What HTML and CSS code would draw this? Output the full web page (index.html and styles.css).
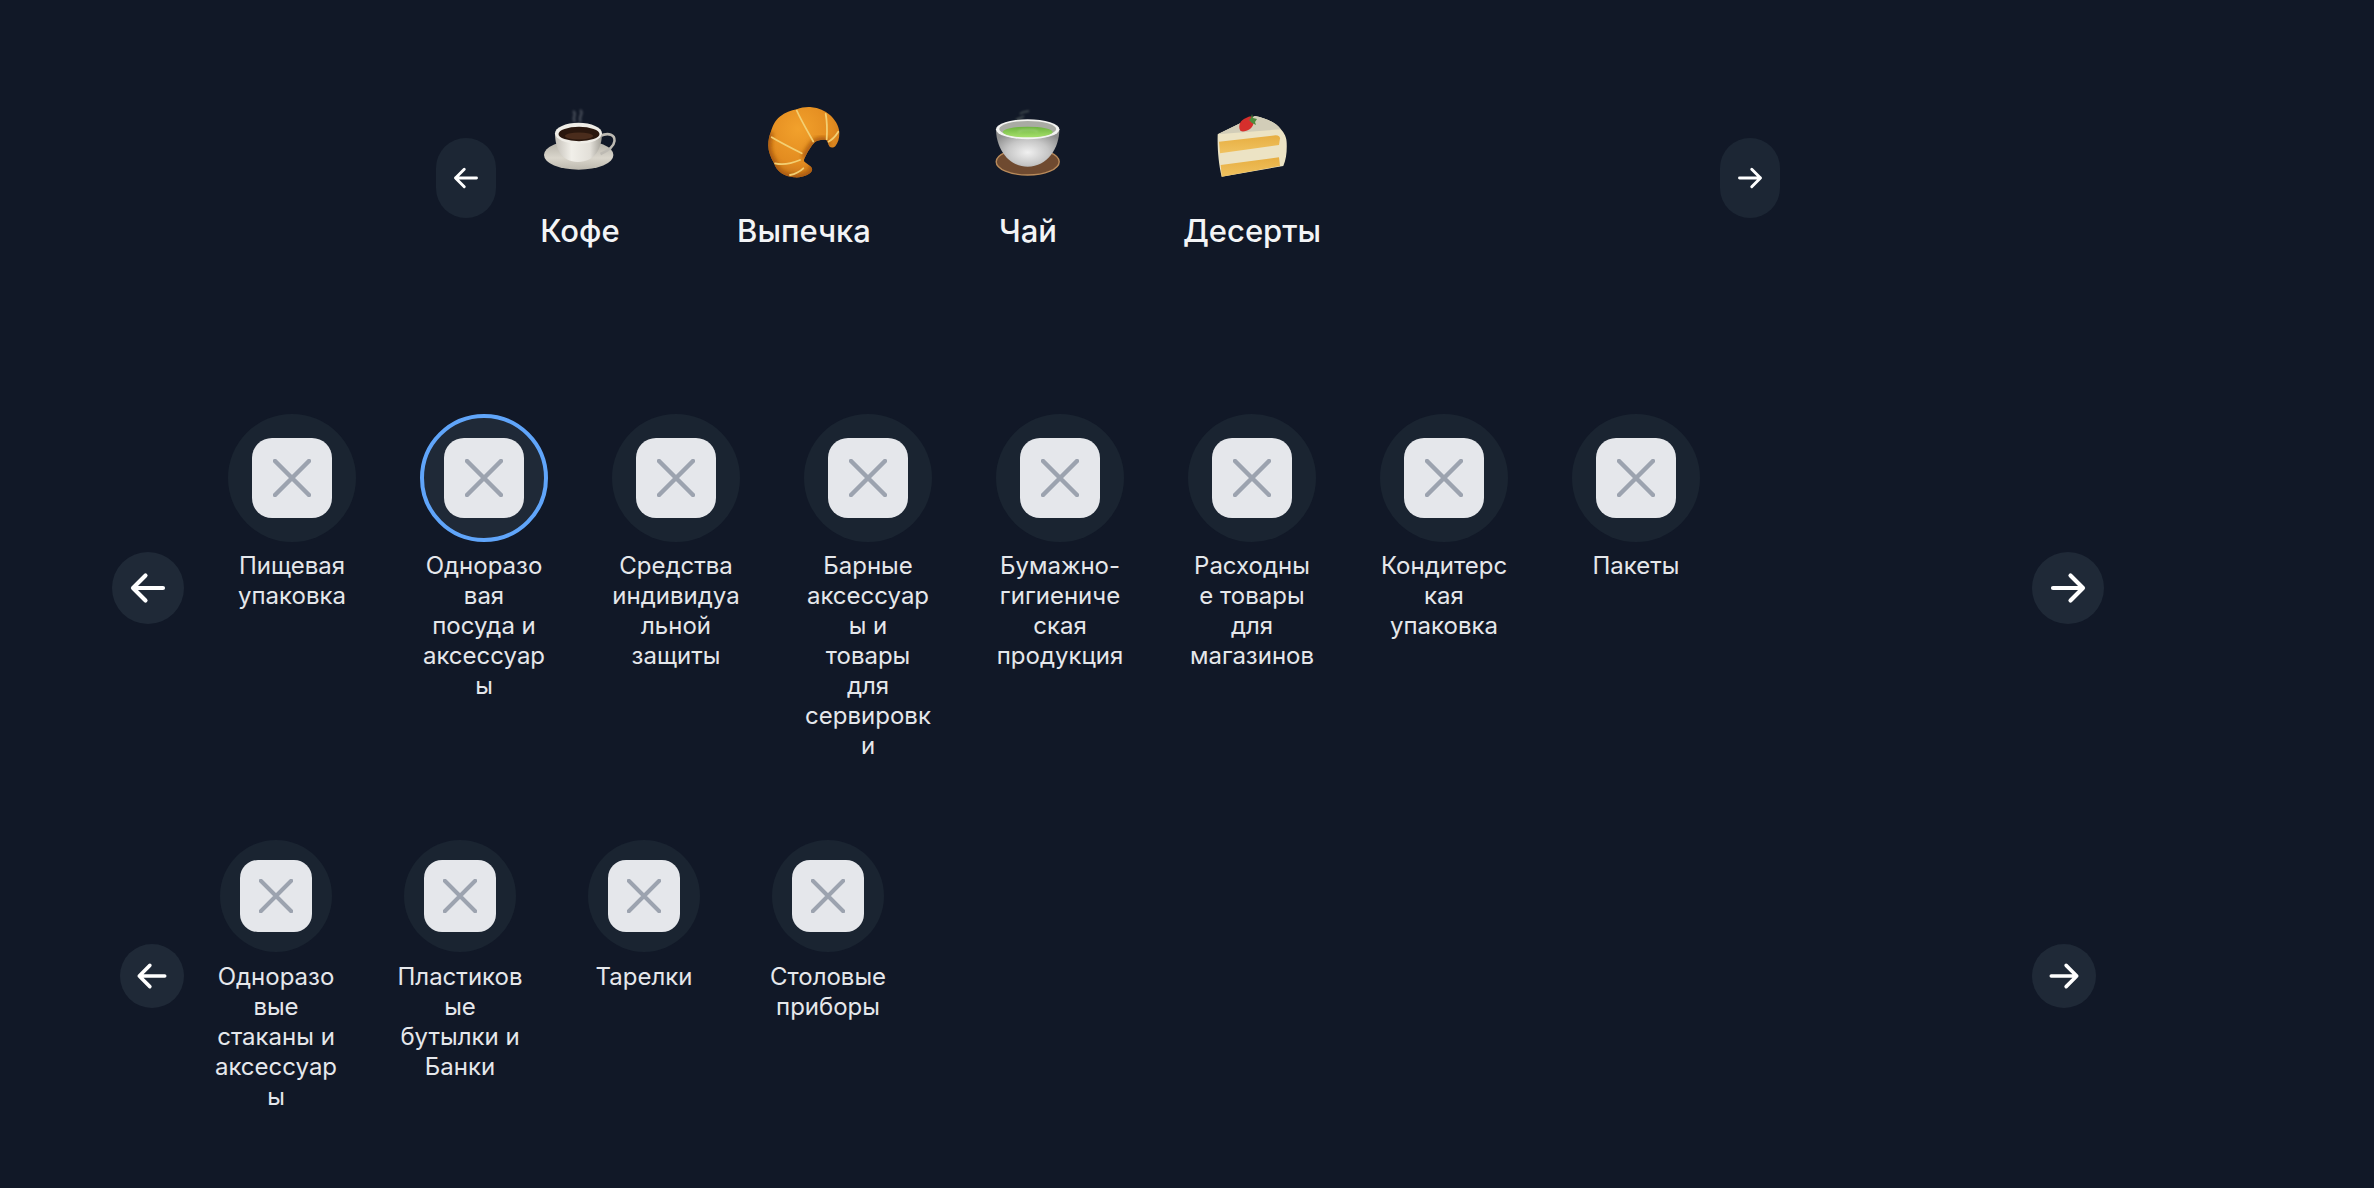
FILE: index.html
```html
<!DOCTYPE html>
<html lang="ru">
<head>
    <meta charset="UTF-8">
    <meta name="viewport" content="width=device-width, initial-scale=1.0">
    <title>Категории</title>
    <link rel="stylesheet" href="styles.css">
</head>
<body>
    <svg class="sprites" width="0" height="0" aria-hidden="true">
        <symbol id="arrow-left" viewBox="0 0 24 24"><path d="M10.5 19.5 3 12l7.5-7.5M3 12h18"/></symbol>
        <symbol id="arrow-right" viewBox="0 0 24 24"><path d="M13.5 4.5 21 12l-7.5 7.5M21 12H3"/></symbol>
        <symbol id="cross" viewBox="0 0 38 38"><path d="M2 2l34 34M36 2 2 36"/></symbol>
    </svg>

    <section class="row row-emoji">
        <button class="arrow"><svg><use href="#arrow-left"/></svg></button>
        <div class="track">
            <div class="emoji-item">
                <svg class="emoji" viewBox="0 0 72 72">
                    <defs>
                        <linearGradient id="cupBody" x1="0" x2="1" y1="0" y2="0">
                            <stop offset="0" stop-color="#c4c0b8"/>
                            <stop offset="0.35" stop-color="#f1efe9"/>
                            <stop offset="0.75" stop-color="#e2dfd8"/>
                            <stop offset="1" stop-color="#a19e96"/>
                        </linearGradient>
                        <linearGradient id="saucer" x1="0" x2="0" y1="0" y2="1">
                            <stop offset="0" stop-color="#b0ada4"/>
                            <stop offset="0.6" stop-color="#dad6cc"/>
                            <stop offset="1" stop-color="#bcb8ae"/>
                        </linearGradient>
                        <filter id="soft" x="-50%" y="-50%" width="200%" height="200%"><feGaussianBlur stdDeviation="1.100"/></filter>
                    </defs>
                    <ellipse cx="34.700" cy="49" rx="34.700" ry="14.700" fill="url(#saucer)"/>
                    <path d="M56 30c9-4 15-1 14.500 5-.5 5-7 10-14 13" fill="none" stroke="#bdbab3" stroke-width="2.600"/>
                    <path d="M11 27c0 15 6 29 23 29s24-14 24-29z" fill="url(#cupBody)"/>
                    <ellipse cx="34.500" cy="27.300" rx="23.500" ry="10.500" fill="#efede7"/>
                    <ellipse cx="35" cy="28" rx="20.500" ry="7.200" fill="#2a170e"/>
                    <ellipse cx="35" cy="30" rx="14" ry="3.500" fill="#4a2c1c"/>
                    <path d="M29 5c5 3-2 6 2 11M36 4c5 3-3 7 1 12" fill="none" stroke="#a3a7ae" stroke-width="2.400" opacity="0.35" filter="url(#soft)"/>
                </svg>
                <span class="emoji-label">Кофе</span>
            </div>
            <div class="emoji-item">
                <svg class="emoji" viewBox="0 0 72 72">
                    <defs>
                        <radialGradient id="crust" cx="0.42" cy="0.32" r="0.72">
                            <stop offset="0" stop-color="#f2a12c"/>
                            <stop offset="0.65" stop-color="#e38c20"/>
                            <stop offset="1" stop-color="#c4731a"/>
                        </radialGradient>
                        <clipPath id="croissantClip">
                            <path d="M42 60c4 3 2 7-3 9-4 2-9 2.800-13 2.300-5-.5-9-1.600-12.500-4-4-3-6.500-6.500-7.500-10C2.500 51 .2 45 .3 39c0-5 1-9 2.400-12.700C4.500 20 7 14.500 12 10.500 17 6.500 23 4.500 28.700 3.300 33.500 1.500 39 .7 43.700 1.300 50.500 2 57 4.500 62 9c5 4.500 8.800 10.500 9.300 17 .3 5.500-1 10.500-3.800 14-2 2-4.500 2-6 .5-1.500-2-1.500-4.700-2.800-6.200-4-1-9-.3-12.400 2.400-3 3-7 9.300-10 16.300-.8 1.500 0 3 1.500 3.700z"/>
                        </clipPath>
                        <filter id="crustBlur" x="-20%" y="-20%" width="140%" height="140%"><feGaussianBlur stdDeviation="2.200"/></filter>
                    </defs>
                    <g clip-path="url(#croissantClip)">
                        <rect width="72" height="72" fill="url(#crust)"/>
                        <path d="M42 60c4 3 2 7-3 9-4 2-9 2.800-13 2.300-5-.5-9-1.600-12.500-4-4-3-6.500-6.500-7.500-10C2.500 51 .2 45 .3 39c0-5 1-9 2.400-12.700" fill="none" stroke="#a8590f" stroke-width="6" filter="url(#crustBlur)"/>
                        <path d="M60 40c-1-3-1-5-2-6-4-1-9 0-12 2-3 3-7 9-10 16" fill="none" stroke="#a8590f" stroke-width="5" filter="url(#crustBlur)"/>
                        <path d="M28.700 4.500c5 11 11 21 16.600 31M57.700 8c1.500 8 1.500 17 1 25.300M3.700 31.300c10 6 20 11 30 16M7 57.300c8 2 17 0 25-3.300M22 69c5-1 10-3.500 13.300-6.700M60.300 35.700c4-2 7.500-6 10-10" fill="none" stroke="#f3cf72" stroke-width="1.800" stroke-linecap="round"/>
                    </g>
                </svg>
                <span class="emoji-label">Выпечка</span>
            </div>
            <div class="emoji-item">
                <svg class="emoji" viewBox="0 0 72 72">
                    <defs>
                        <radialGradient id="bowl" cx="0.5" cy="0.62" r="0.6">
                            <stop offset="0" stop-color="#f0f0f0"/>
                            <stop offset="0.55" stop-color="#c6c6c6"/>
                            <stop offset="1" stop-color="#8e8e8e"/>
                        </radialGradient>
                        <linearGradient id="matcha" x1="0" x2="0" y1="0" y2="1">
                            <stop offset="0" stop-color="#6db33f"/>
                            <stop offset="1" stop-color="#a5e06a"/>
                        </linearGradient>
                        <filter id="softTea" x="-50%" y="-50%" width="200%" height="200%"><feGaussianBlur stdDeviation="1"/></filter>
                    </defs>
                    <g transform="translate(4 0)">
                        <ellipse cx="31.700" cy="55.700" rx="31.500" ry="13.300" fill="#6f4a30" stroke="#b98a5a" stroke-width="1.400"/>
                        <path d="M0 23c0 19 12 37.700 31.700 37.700S63.400 42 63.400 23z" fill="url(#bowl)"/>
                        <ellipse cx="31.700" cy="23.300" rx="31.700" ry="10" fill="#f3f3f1"/>
                        <ellipse cx="31.700" cy="23" rx="28.500" ry="8" fill="#a9aba4"/>
                        <ellipse cx="31.700" cy="26" rx="25" ry="5.300" fill="url(#matcha)"/>
                        <path d="M22 26c5-3 17-3 20 0M24 8c3-3 7-2 9-3M20 14c3-2 6-2 8-4" fill="none" stroke="#d6e6c8" stroke-width="1.600" opacity="0.3" filter="url(#softTea)"/>
                    </g>
                </svg>
                <span class="emoji-label">Чай</span>
            </div>
            <div class="emoji-item">
                <svg class="emoji" viewBox="0 0 72 72">
                    <defs>
                        <linearGradient id="sponge" x1="0" x2="0" y1="0" y2="1">
                            <stop offset="0" stop-color="#e7ae42"/>
                            <stop offset="1" stop-color="#f0c25f"/>
                        </linearGradient>
                    </defs>
                    <path d="M1.700 28.300 39 10c11 2 21 7 25 12.300 5 5 6.700 10 6.700 15 .3 8-.5 16-3.400 22.700L5.700 70.700c-3-12-4.500-28-4-42.400z" fill="#ece3c4"/>
                    <path d="M1.700 28.300 39 10c11 2 21 7 25 12.300 1 1.400-1 1-3 1.200L1.700 28.300z" fill="#d2cdb8"/>
                    <path d="M3 35.700l56.700-6.400c3 .2 4.300 1.500 4.300 3l-1 6.700L4 47.300z" fill="url(#sponge)"/>
                    <path d="M4.700 59 63 51.300l1 8.700-58.300 10.700z" fill="url(#sponge)"/>
                    <path d="M36 11c3 3 2 9-2 12-4 3-10 3-10 1-2-4 0-10 6-12 2-1 4-2 6-1z" fill="#d62f2c"/>
                    <path d="M36 8l1 4 4 1-2 3 1 3-4-2-3-3 2-2z" fill="#4e8b3c"/>
                </svg>
                <span class="emoji-label">Десерты</span>
            </div>
        </div>
        <button class="arrow"><svg><use href="#arrow-right"/></svg></button>
    </section>

    <section class="row row-large">
        <button class="arrow"><svg><use href="#arrow-left"/></svg></button>
        <div class="track">
            <div class="category">
                <div class="circle"><div class="thumb"><svg><use href="#cross"/></svg></div></div>
                <span class="category-name">Пищевая упаковка</span>
            </div>
            <div class="category active">
                <div class="circle"><div class="thumb"><svg><use href="#cross"/></svg></div></div>
                <span class="category-name">Одноразовая посуда и аксессуары</span>
            </div>
            <div class="category">
                <div class="circle"><div class="thumb"><svg><use href="#cross"/></svg></div></div>
                <span class="category-name">Средства индивидуальной защиты</span>
            </div>
            <div class="category">
                <div class="circle"><div class="thumb"><svg><use href="#cross"/></svg></div></div>
                <span class="category-name">Барные аксессуары и товары для сервировки</span>
            </div>
            <div class="category">
                <div class="circle"><div class="thumb"><svg><use href="#cross"/></svg></div></div>
                <span class="category-name">Бумажно-гигиеническая продукция</span>
            </div>
            <div class="category">
                <div class="circle"><div class="thumb"><svg><use href="#cross"/></svg></div></div>
                <span class="category-name">Расходные товары для магазинов</span>
            </div>
            <div class="category">
                <div class="circle"><div class="thumb"><svg><use href="#cross"/></svg></div></div>
                <span class="category-name">Кондитерская упаковка</span>
            </div>
            <div class="category">
                <div class="circle"><div class="thumb"><svg><use href="#cross"/></svg></div></div>
                <span class="category-name">Пакеты</span>
            </div>
        </div>
        <button class="arrow"><svg><use href="#arrow-right"/></svg></button>
    </section>

    <section class="row row-small">
        <button class="arrow"><svg><use href="#arrow-left"/></svg></button>
        <div class="track">
            <div class="category">
                <div class="circle"><div class="thumb"><svg><use href="#cross"/></svg></div></div>
                <span class="category-name">Одноразовые стаканы и аксессуары</span>
            </div>
            <div class="category">
                <div class="circle"><div class="thumb"><svg><use href="#cross"/></svg></div></div>
                <span class="category-name">Пластиковые бутылки и Банки</span>
            </div>
            <div class="category">
                <div class="circle"><div class="thumb"><svg><use href="#cross"/></svg></div></div>
                <span class="category-name">Тарелки</span>
            </div>
            <div class="category">
                <div class="circle"><div class="thumb"><svg><use href="#cross"/></svg></div></div>
                <span class="category-name">Столовые приборы</span>
            </div>
        </div>
        <button class="arrow"><svg><use href="#arrow-right"/></svg></button>
    </section>
</body>
</html>
```

FILE: styles.css
```css
:root {
    --background: #111827;
    --surface: #1f2937;
    --surface-dim: #1a2431;
    --accent: #60a5fa;
}
* { box-sizing: border-box; margin: 0; padding: 0; }
body {
    font-family: 'Inter', 'Noto Sans', sans-serif;
    background: var(--background);
    color: #e5e7eb;
    height: 100vh;
    overflow: hidden;
    padding-top: 106px;
}
.sprites { position: absolute; }

.row { display: flex; align-items: center; }
.track { flex: 1; display: flex; align-items: flex-start; }

.arrow {
    flex: none;
    display: flex; align-items: center; justify-content: center;
    background: var(--surface);
    border: none;
    border-radius: 50%;
    cursor: pointer;
}
.arrow svg {
    fill: none; stroke: white;
    stroke-width: 2.5;
    stroke-linecap: round; stroke-linejoin: round;
}

/* top row, emoji tabs */
.row-emoji { padding: 0 594px 0 436px; }
.row-emoji .track { padding-left: 4px; gap: 64px; }
.row-emoji .arrow { width: 60px; height: 80px; border-radius: 30px; background: #1c2634; }
.row-emoji .arrow svg { width: 28px; height: 28px; }
.emoji-item { width: 160px; display: flex; flex-direction: column; align-items: center; }
.emoji { width: 72px; height: 72px; display: block; overflow: visible; }
.emoji-label {
    margin: 37px 0 3px;
    font-size: 31px; line-height: 32px; font-weight: 500;
    color: #f3f4f6;
}

/* category rows */
.category { display: flex; flex-direction: column; align-items: center; }
.circle {
    display: flex; align-items: center; justify-content: center;
    background: var(--surface-dim);
    border-radius: 50%;
}
.thumb {
    display: flex; align-items: center; justify-content: center;
    background: #e5e7eb;
}
.thumb svg {
    fill: none; stroke: #9ca3af;
    stroke-width: 4.5;
    stroke-linecap: round;
}
.category.active .circle { background: var(--surface); border: 4px solid var(--accent); }
.category-name {
    width: 100%;
    text-align: center;
    font-size: 24px; line-height: 30px;
    overflow-wrap: break-word;
}

.row-large { padding: 0 270px 0 112px; margin-top: 164px; }
.row-large .track { padding-left: 44px; gap: 64px; }
.row-large .arrow { width: 72px; height: 72px; }
.row-large .arrow svg { width: 40px; height: 40px; }
.row-large .category { width: 128px; }
.row-large .circle { width: 128px; height: 128px; margin-bottom: 9px; }
.row-large .thumb { width: 80px; height: 80px; border-radius: 20px; }
.row-large .thumb svg { width: 38px; height: 38px; }

.row-small { padding: 0 278px 0 120px; margin-top: 79px; }
.row-small .track { padding-left: 28px; gap: 56px; }
.row-small .arrow { width: 64px; height: 64px; }
.row-small .arrow svg { width: 34px; height: 34px; }
.row-small .category { width: 128px; }
.row-small .circle { width: 112px; height: 112px; margin-bottom: 10px; }
.row-small .thumb { width: 72px; height: 72px; border-radius: 18px; }
.row-small .thumb svg { width: 34px; height: 34px; }
```
